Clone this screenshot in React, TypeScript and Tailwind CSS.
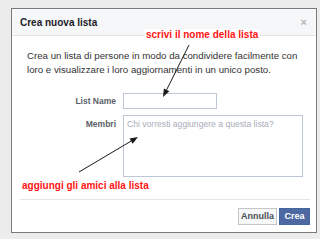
const CreateListDialog = () => {
  return (
    <div className="relative h-[239px] w-[320px] overflow-hidden bg-[#ececec] pl-[11px] pt-[8px] font-['Liberation_Sans',Arial,sans-serif]">
      {/* Dialog */}
      <div className="flex h-[225px] w-[306px] flex-col border border-[#7a7a7a] bg-white">
        {/* Header */}
        <div className="flex h-[27px] items-center justify-between border-b border-[#e3e4e8] bg-[#f6f7f9] pl-[8px] pr-[9px]">
          <span className="text-[10px] font-bold text-[#1d2129]">Crea nuova lista</span>
          <span className="text-[11px] font-bold leading-none text-[#b4b4b4]">×</span>
        </div>

        {/* Body */}
        <div className="flex-1 pl-[15px] pr-[4px] pt-[13px]">
          <p className="whitespace-nowrap text-[9.7px] leading-[14px] text-[#333]">
            Crea un lista di persone in modo da condividere facilmente con
            <br />
            loro e visualizzare i loro aggiornamenti in un unico posto.
          </p>

          <div className="mt-[16px] flex items-center">
            <label className="w-[89px] text-right text-[8.5px] font-bold text-[#5a5f68]">List Name</label>
            <div className="ml-[7px] h-[16px] w-[94px] border border-[#bdc7d8] bg-white" />
          </div>

          <div className="mt-[6px] flex items-start">
            <label className="w-[89px] pt-[3px] text-right text-[8.5px] font-bold text-[#5a5f68]">Membri</label>
            <div className="ml-[7px] h-[62px] w-[180px] border border-[#bdc7d8] bg-white px-[3px] pt-[2px] text-[8.6px] text-[#a7adb8]">
              Chi vorresti aggiungere a questa lista?
            </div>
          </div>
        </div>

        {/* Footer */}
        <div className="ml-[8px] mr-[6px] flex justify-end gap-[2px] border-t border-[#e5e5e5] pb-[7px] pt-[8px]">
          <button className="h-[17px] w-[39px] border border-[#c4c6ca] bg-[#f6f7f9] text-[9px] font-bold text-[#4b4f56]">
            Annulla
          </button>
          <button className="h-[17px] w-[31px] border border-[#4267a0] bg-[#4e69a2] text-[9px] font-bold text-white">
            Crea
          </button>
        </div>
      </div>

      {/* Annotations */}
      <span className="absolute left-[144px] top-[29px] bg-white px-[2px] text-[10px] font-bold leading-[12px] text-[#ff1414]">
        scrivi il nome della lista
      </span>
      <span className="absolute left-[20px] top-[180px] bg-white px-[2px] text-[10px] font-bold leading-[12px] text-[#ff1414]">
        aggiungi gli amici alla lista
      </span>

      <svg className="pointer-events-none absolute left-0 top-0" width="320" height="239" viewBox="0 0 320 239">
        <line x1="189" y1="45" x2="166.6" y2="89.9" stroke="#1a1a1a" strokeWidth="1" />
        <polygon points="163,97 169.3,91.2 163.9,88.5" fill="#1a1a1a" />
        <line x1="79" y1="172" x2="131.1" y2="141.1" stroke="#1a1a1a" strokeWidth="1" />
        <polygon points="138,137 132.6,143.7 129.6,138.5" fill="#1a1a1a" />
      </svg>
    </div>
  );
};

export default CreateListDialog;
